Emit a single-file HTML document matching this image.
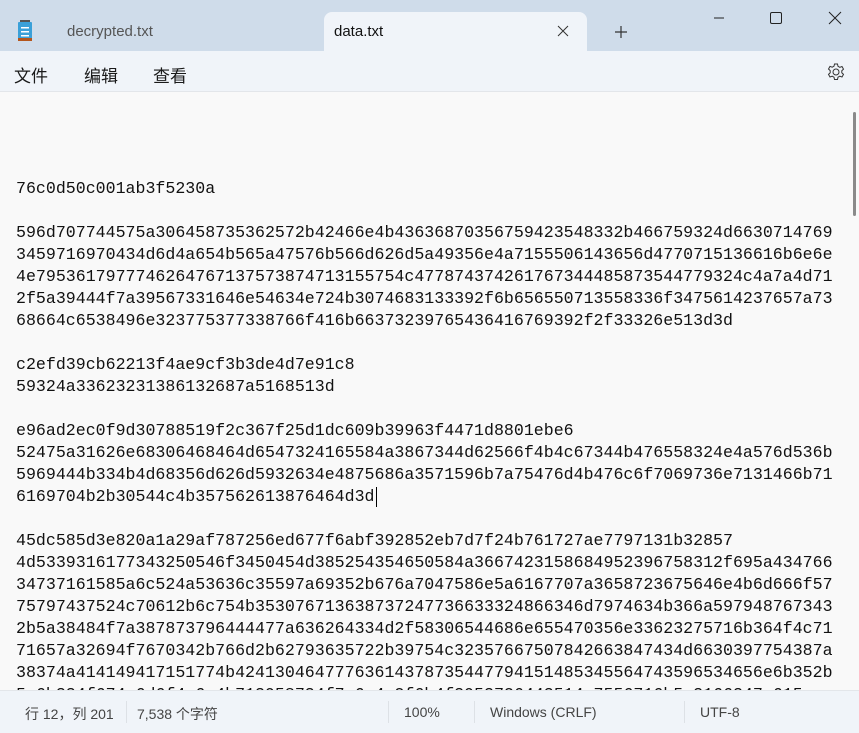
<!DOCTYPE html>
<html><head><meta charset="utf-8"><style>
*{margin:0;padding:0;box-sizing:border-box}
body{width:859px;height:733px;overflow:hidden;background:#f9f9f9;font-family:"Liberation Sans","Noto Sans CJK SC",sans-serif;position:relative}
#tabs{position:absolute;left:0;top:0;width:859px;height:51px;background:#cfdcea}
#tab{position:absolute;left:324px;top:12px;width:263px;height:39px;background:#f0f4f9;border-radius:8px 8px 0 0}
#menu{position:absolute;left:0;top:51px;width:859px;height:41px;background:#f0f4f9;border-bottom:1px solid #e3e6ea}
.t{position:absolute;font-size:15px;color:#1a1a1a}
#ed{position:absolute;left:0;top:92px;width:859px;height:598px;overflow:hidden}
#ed pre{position:absolute;left:16px;top:86px;font-family:"Liberation Mono",monospace;font-size:16.6px;line-height:22px;color:#111}
#sb{position:absolute;left:0;top:690px;width:859px;height:43px;background:#f0f4f9;border-top:1px solid #e3e6ea}
.s{position:absolute;top:13px;font-size:14px;color:#444}
.sep{position:absolute;top:10px;width:1px;height:22px;background:#dde1e6}
</style></head><body>
<div id="tabs">
<svg style="position:absolute;left:16px;top:20px" width="20" height="22"><rect x="2" y="2" width="14" height="17" rx="1" fill="#3aa0d8"/><rect x="2" y="18" width="14" height="3" fill="#b4561c"/><rect x="5" y="7" width="8" height="1.5" fill="#fff"/><rect x="5" y="11" width="8" height="1.5" fill="#fff"/><rect x="5" y="15" width="8" height="1.5" fill="#fff"/><rect x="4" y="0" width="10" height="2" fill="#555"/></svg>
<div class="t" style="left:67px;top:23px;color:#555">decrypted.txt</div>
<div id="tab"><div class="t" style="left:10px;top:11px;color:#111">data.txt</div>
<svg style="position:absolute;left:233px;top:13px" width="12" height="12"><path d="M1 1L11 11M11 1L1 11" stroke="#333" stroke-width="1"/></svg></div>
<svg style="position:absolute;left:614px;top:25px" width="14" height="14"><path d="M7 1V13M1 7H13" stroke="#333" stroke-width="1.2"/></svg>
<svg style="position:absolute;left:713px;top:12px" width="12" height="12"><path d="M1 6H11" stroke="#222"/></svg>
<svg style="position:absolute;left:769px;top:11px" width="14" height="14"><rect x="1.5" y="1.5" width="11" height="11" rx="1.5" fill="none" stroke="#222"/></svg>
<svg style="position:absolute;left:828px;top:11px" width="14" height="14"><path d="M1 1L13 13M13 1L1 13" stroke="#222"/></svg>
</div>
<div id="menu">
<div class="t" style="left:14px;top:11px;font-size:17px">文件</div>
<div class="t" style="left:84px;top:11px;font-size:17px">编辑</div>
<div class="t" style="left:153px;top:11px;font-size:17px">查看</div>
<svg style="position:absolute;left:826px;top:11px" width="20" height="20" viewBox="0 0 20 20"><circle cx="10" cy="10" r="3" fill="none" stroke="#333"/><path d="M8.5 2h3l.5 2.3 1.8 1 2.2-.8 1.5 2.6-1.7 1.6v2.1l1.7 1.6-1.5 2.6-2.2-.8-1.8 1-.5 2.3h-3l-.5-2.3-1.8-1-2.2.8-1.5-2.6 1.7-1.6V8.6L2.5 7l1.5-2.6 2.2.8 1.8-1z" fill="none" stroke="#333"/></svg>
</div>
<div id="ed"><pre>76c0d50c001ab3f5230a

596d707744575a306458735362572b42466e4b43636870356759423548332b466759324d6630714769
3459716970434d6d4a654b565a47576b566d626d5a49356e4a7155506143656d4770715136616b6e6e
4e7953617977746264767137573874713155754c477874374261767344485873544779324c4a7a4d71
2f5a39444f7a39567331646e54634e724b3074683133392f6b656550713558336f3475614237657a73
68664c6538496e323775377338766f416b66373239765436416769392f2f33326e513d3d

c2efd39cb62213f4ae9cf3b3de4d7e91c8
59324a33623231386132687a5168513d

e96ad2ec0f9d30788519f2c367f25d1dc609b39963f4471d8801ebe6
52475a31626e68306468464d6547324165584a3867344d62566f4b4c67344b476558324e4a576d536b
5969444b334b4d68356d626d5932634e4875686a3571596b7a75476d4b476c6f7069736e7131466b71
6169704b2b30544c4b357562613876464d3d

45dc585d3e820a1a29af787256ed677f6abf392852eb7d7f24b761727ae7797131b32857
4d5339316177343250546f3450454d385254354650584a3667423158684952396758312f695a434766
34737161585a6c524a53636c35597a69352b676a7047586e5a6167707a3658723675646e4b6d666f57
75797437524c70612b6c754b353076713638737247736633324866346d7974634b366a597948767343
2b5a38484f7a387873796444477a636264334d2f58306544686e655470356e33623275716b364f4c71
71657a32694f7670342b766d2b62793635722b39754c32357667507842663847434d6630397754387a
38374a414149417151774b42413046477763614378735447794151485345564743596534656e6b352b
5a6b334f674c6d6f4c6c4b713958734f7a6e4c2f6b4f3953726443514a7556716b5a3166347a615a</pre>
<div style="position:absolute;left:376px;top:395px;width:1px;height:20px;background:#000"></div>
<div style="position:absolute;left:853px;top:20px;width:3px;height:104px;background:#8a8a8a;border-radius:2px"></div>
</div>
<div id="sb">
<div class="s" style="left:25px">行 12，列 201</div>
<div class="sep" style="left:126px"></div>
<div class="s" style="left:137px">7,538 个字符</div>
<div class="sep" style="left:388px"></div>
<div class="s" style="left:404px">100%</div>
<div class="sep" style="left:474px"></div>
<div class="s" style="left:490px">Windows (CRLF)</div>
<div class="sep" style="left:684px"></div>
<div class="s" style="left:700px">UTF-8</div>
</div>
</body></html>
